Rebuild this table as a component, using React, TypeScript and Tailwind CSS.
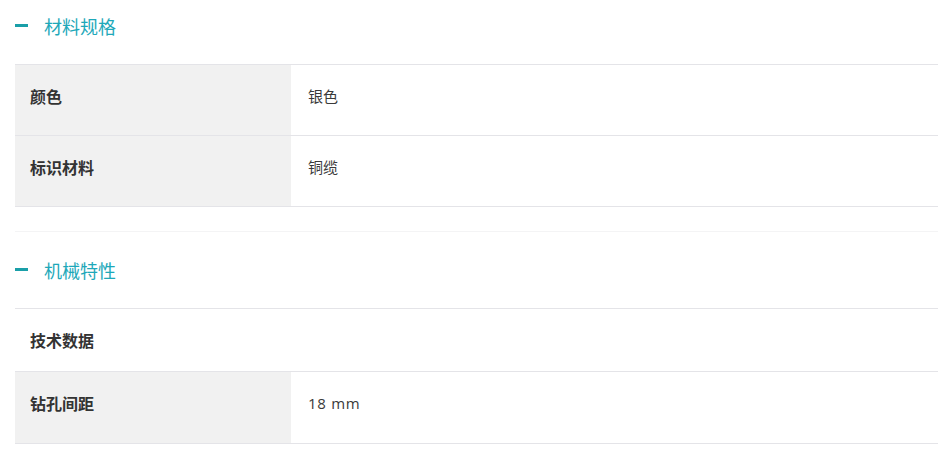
import React from "react";

const font = { fontFamily: '"Open Sans", "Noto Sans CJK SC", sans-serif' };

function Header({ title }: { title: string }) {
  return (
    <div className="flex items-center">
      <span className="block w-[13px] h-[3px] bg-[#1a9fa8] mt-[-2px]" />
      <span className="ml-[16px] text-[18px] leading-[24px] text-[#1ea8b9]" style={{ fontFamily: '"Noto Sans CJK SC", sans-serif' }}>
        {title}
      </span>
    </div>
  );
}

function Row({ label, value, h, gray = true, latin = false }: { label: string; value?: string; h: string; gray?: boolean; latin?: boolean }) {
  return (
    <div className={`flex border-b border-[#e4e4e8] ${h}`}>
      <div className={`w-[276px] shrink-0 pl-[15px] pt-[19px] ${gray ? "bg-[#f1f1f1]" : ""}`}>
        <span className="text-[16px] leading-[24px] font-bold text-[#333333]" style={{ fontFamily: '"Noto Sans CJK SC", sans-serif' }}>
          {label}
        </span>
      </div>
      {value !== undefined && (
        <div
          className={`pl-[17px] pt-[20px] text-[15px] leading-[22px] text-[#3a3a3a] ${latin ? "tracking-[0.7px] pl-[16px]" : ""}`}
          style={font}
        >
          {value}
        </div>
      )}
    </div>
  );
}

export default function App() {
  return (
    <div className="w-[947px] h-[457px] bg-white overflow-hidden">
      <div className="ml-[15px] w-[923px]">
        <div className="border-b border-[#f4f4f5] pb-[24px]">
          <div className="h-[64px] pt-[14px]">
            <Header title="材料规格" />
          </div>
          <div className="border-t border-[#e4e4e8]">
            <Row label="颜色" value="银色" h="h-[71px]" />
            <Row label="标识材料" value="铜缆" h="h-[71px]" />
          </div>
        </div>
        <div className="h-[76px] pt-[26px]">
          <Header title="机械特性" />
        </div>
        <div className="border-t border-[#e4e4e8]">
          <Row label="技术数据" h="h-[63px]" gray={false} />
          <Row label="钻孔间距" value="18 mm" h="h-[72px]" latin />
        </div>
      </div>
    </div>
  );
}
